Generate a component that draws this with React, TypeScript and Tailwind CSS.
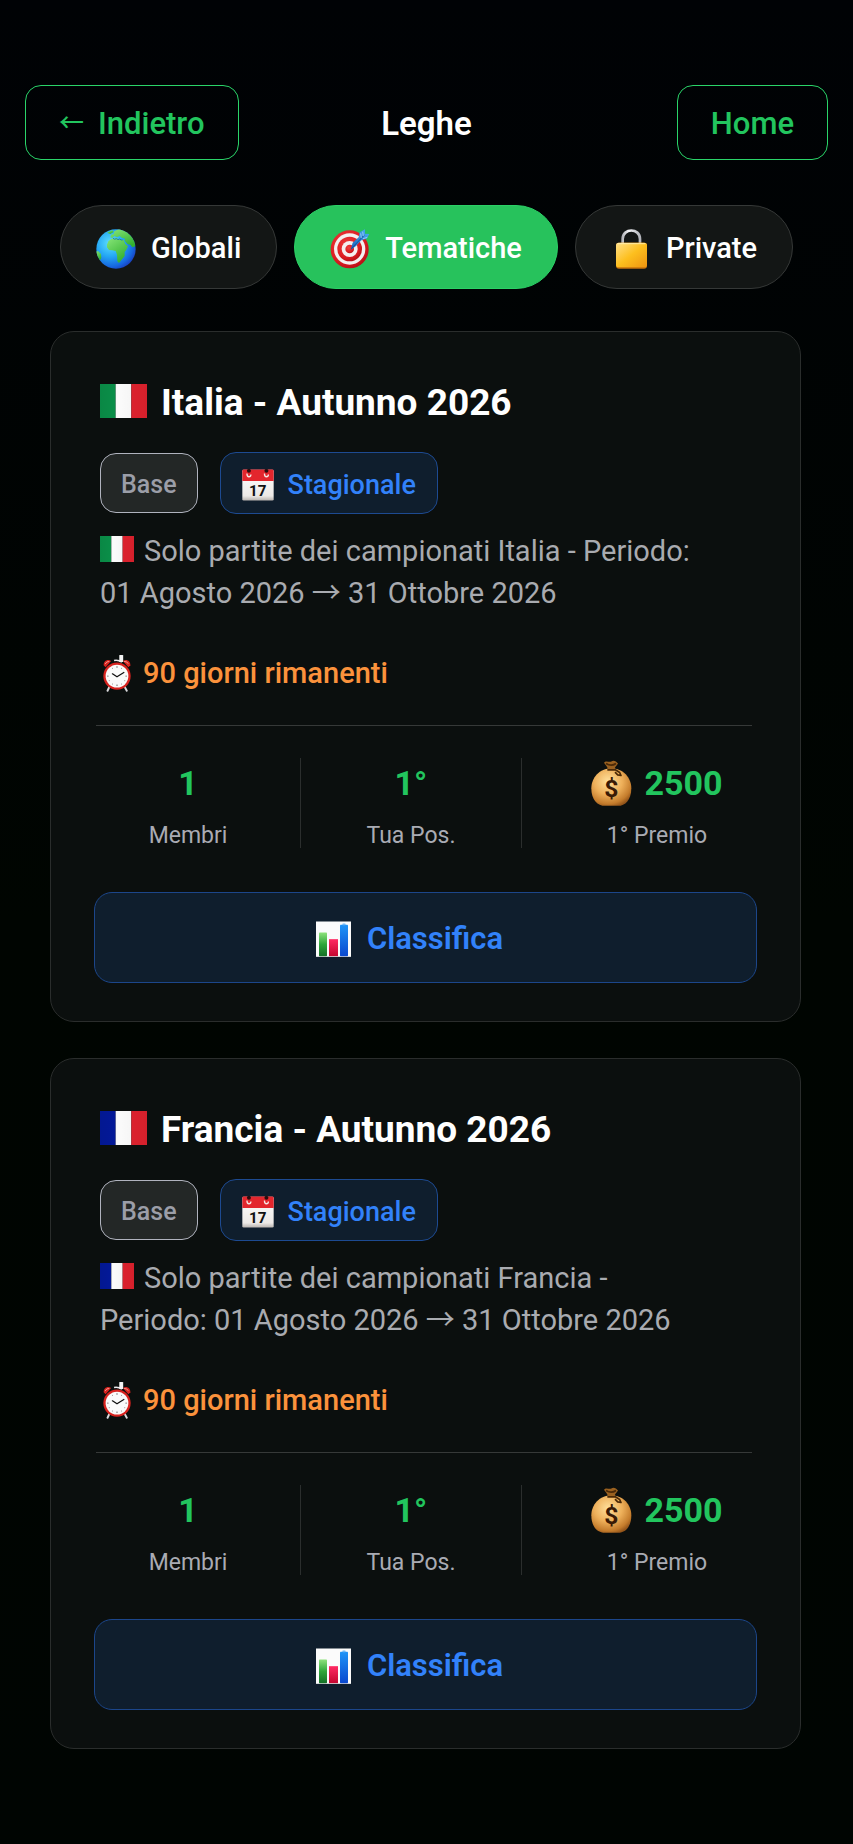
import { useId, useState, type ReactNode } from 'react';

type Country = 'italia' | 'francia';

function Flag({ country, className }: { country: Country; className: string }) {
  const id = useId();
  const left = country === 'italia' ? '#0a9049' : '#03199a';
  return (
    <svg viewBox="0 0 48 34" preserveAspectRatio="none" className={className} aria-hidden="true">
      <defs>
        <linearGradient id={id} x1="0" x2="1" y1="0" y2="0">
          <stop offset="0" stopColor="#000" stopOpacity="0.06" />
          <stop offset="0.4" stopColor="#000" stopOpacity="0" />
          <stop offset="1" stopColor="#000" stopOpacity="0.05" />
        </linearGradient>
      </defs>
      <rect width="16" height="34" fill={left} />
      <rect x="16" width="16" height="34" fill="#fbfbfb" />
      <rect x="32" width="16" height="34" fill="#e0222e" />
      <rect width="48" height="34" fill={`url(#${id})`} />
    </svg>
  );
}

function GlobeIcon() {
  const id = useId();
  return (
    <svg viewBox="17 51 120 120" className="size-10" aria-hidden="true">
      <defs>
        <radialGradient id={`${id}s`} cx="0.35" cy="0.35" r="0.75">
          <stop offset="0" stopColor="#5fe0ff" />
          <stop offset="0.45" stopColor="#25a8f5" />
          <stop offset="0.8" stopColor="#1666e0" />
          <stop offset="1" stopColor="#1a35b5" />
        </radialGradient>
        <linearGradient id={`${id}l`} x1="0" y1="0" x2="0.6" y2="1">
          <stop offset="0" stopColor="#86e578" />
          <stop offset="1" stopColor="#33b02f" />
        </linearGradient>
        <clipPath id={`${id}c`}>
          <circle cx="77" cy="111" r="59" />
        </clipPath>
      </defs>
      <circle cx="77" cy="111" r="59" fill={`url(#${id}s)`} />
      <g clipPath={`url(#${id}c)`} fill={`url(#${id}l)`}>
        <path d="M50 98 L54 88 L64 80 L78 78 L88 82 L100 84 L105 96 L113 103 L108 113 L103 120 L103 132 L95 142 L86 153 L81 148 L80 128 L76 117 L66 115 L56 114 L50 106 Z" />
        <path d="M60 76 L62 68 L70 66 L72 58 L84 52 L104 52 L124 70 L136 92 L134 103 L126 106 L120 98 L112 97 L103 86 L104 80 L94 77 L88 72 L80 76 L72 72 L66 78 Z" />
        <path d="M50 62 L66 54 L70 60 L60 66 Z" />
        <path d="M14 118 L24 118 L32 126 L33 138 L28 146 L20 140 Z" />
      </g>
      <path d="M68 79 q5 5 10 1 q5 5 10 1 q4 4 9 3" fill="none" stroke="#187fb0" strokeWidth="3" />
    </svg>
  );
}

function TargetIcon() {
  const id = useId();
  return (
    <svg viewBox="996 503 120 120" className="size-10" aria-hidden="true">
      <defs>
        <radialGradient id={`${id}r`} cx="0.4" cy="0.35" r="0.7">
          <stop offset="0" stopColor="#f0413f" />
          <stop offset="0.7" stopColor="#dc1c22" />
          <stop offset="1" stopColor="#b30d14" />
        </radialGradient>
        <linearGradient id={`${id}d`} x1="0" y1="1" x2="1" y2="0">
          <stop offset="0" stopColor="#1a5fb8" />
          <stop offset="1" stopColor="#4ab2f5" />
        </linearGradient>
      </defs>
      <circle cx="1055" cy="564" r="57" fill={`url(#${id}r)`} />
      <circle cx="1055" cy="563" r="47" fill="#f4efef" />
      <circle cx="1055" cy="563" r="37" fill={`url(#${id}r)`} />
      <circle cx="1055" cy="563" r="24" fill="#f4efef" />
      <circle cx="1055" cy="563" r="13" fill={`url(#${id}r)`} />
      <path d="M1058 566 L1064 544 L1082 528 L1085 513 L1101 504 L1101 517 L1114 518 L1106 532 L1090 537 L1074 554 Z" fill={`url(#${id}d)`} />
      <path d="M1060 562 L1098 522" stroke="#0f4f9e" strokeWidth="3" />
      <path d="M1088 516 L1090 530 M1094 511 L1096 524 M1095 532 L1108 528" stroke="#bfe4ff" strokeWidth="2" />
    </svg>
  );
}

function LockIcon() {
  const id = useId();
  return (
    <svg viewBox="570 502 120 120" className="size-10" aria-hidden="true">
      <defs>
        <linearGradient id={`${id}b`} x1="0" y1="0" x2="1" y2="1">
          <stop offset="0" stopColor="#ffe08a" />
          <stop offset="0.5" stopColor="#fdbf1e" />
          <stop offset="1" stopColor="#ee9410" />
        </linearGradient>
        <linearGradient id={`${id}s`} x1="0" y1="0" x2="1" y2="0">
          <stop offset="0" stopColor="#b4b6bc" />
          <stop offset="0.35" stopColor="#f4f4f7" />
          <stop offset="1" stopColor="#b3b5bb" />
        </linearGradient>
      </defs>
      <path d="M605 548 V532 C605 498 657 498 657 532 V548" fill="none" stroke={`url(#${id}s)`} strokeWidth="8" />
      <rect x="585" y="543" width="93" height="78" rx="9" fill="#c9740c" />
      <rect x="585" y="543" width="93" height="74" rx="8" fill={`url(#${id}b)`} />
      <path d="M591 546 H672" stroke="#fff0b8" strokeWidth="2.5" strokeLinecap="round" />
    </svg>
  );
}

function CalendarIcon() {
  const id = useId();
  return (
    <svg viewBox="609 450 97 96" className="size-8 shrink-0" aria-hidden="true">
      <defs>
        <linearGradient id={id} x1="0" y1="0" x2="0" y2="1">
          <stop offset="0" stopColor="#fff" />
          <stop offset="0.85" stopColor="#ece9e6" />
          <stop offset="1" stopColor="#b9b4b0" />
        </linearGradient>
      </defs>
      <rect x="610" y="452" width="95" height="93" rx="4" fill={`url(#${id})`} />
      <path d="M610 486 V455 q0-4 4-4 H701 q4 0 4 4 V486 Z" fill="#e3262d" />
      <g fill="#2a0d0e">
        <circle cx="630" cy="455" r="6" />
        <circle cx="683" cy="455" r="6" />
      </g>
      <g fill="none" stroke="#f5e9e6" strokeWidth="4">
        <path d="M624 463 q0 10 6 10 q6 0 6-7" />
        <path d="M677 463 q0 10 6 10 q6 0 6-7" />
      </g>
      <text x="657" y="532" textAnchor="middle" fontSize="46" fontWeight="700" fill="#111" className="font-['Roboto',sans-serif]">
        17
      </text>
    </svg>
  );
}

function AlarmIcon() {
  return (
    <svg viewBox="188 93 86 115" className="h-[38px] w-7 shrink-0" aria-hidden="true">
      <path d="M208 192 L202 205 M254 192 L261 205" stroke="#d9d9dc" strokeWidth="6" strokeLinecap="round" />
      <path d="M190 127 C189 113 203 106 213 114 L196 133 Z" fill="#d9231f" />
      <path d="M272 127 C273 113 259 106 249 114 L266 133 Z" fill="#d9231f" />
      <path d="M195 122 q4-8 11-7 M254 115 q8-1 11 6" fill="none" stroke="#f59a90" strokeWidth="3" strokeLinecap="round" />
      <path d="M222 112 q12-3 24 5" fill="none" stroke="#e9e9ec" strokeWidth="5" />
      <rect x="238" y="95" width="12" height="22" rx="2" fill="#f4f4f4" />
      <circle cx="231" cy="160" r="42" fill="#d8231f" />
      <circle cx="231" cy="160" r="35" fill="#fafafa" />
      <g fill="#555">
        <circle cx="231" cy="132" r="2" />
        <circle cx="231" cy="188" r="2" />
        <circle cx="203" cy="160" r="2" />
        <circle cx="259" cy="160" r="2" />
        <circle cx="245" cy="136" r="1.5" />
        <circle cx="217" cy="136" r="1.5" />
        <circle cx="245" cy="184" r="1.5" />
        <circle cx="217" cy="184" r="1.5" />
        <circle cx="207" cy="174" r="1.5" />
        <circle cx="255" cy="174" r="1.5" />
      </g>
      <path d="M217 153 L231 162 L252 149" fill="none" stroke="#111" strokeWidth="4" strokeLinecap="round" strokeLinejoin="round" />
    </svg>
  );
}

function MoneyBagIcon() {
  const id = useId();
  return (
    <svg viewBox="504 420 123 140" className="h-[47px] w-[41px]" aria-hidden="true">
      <defs>
        <radialGradient id={`${id}b`} cx="0.42" cy="0.35" r="0.7">
          <stop offset="0" stopColor="#ffe09c" />
          <stop offset="0.5" stopColor="#eeb05a" />
          <stop offset="0.85" stopColor="#c47c2c" />
          <stop offset="1" stopColor="#94551a" />
        </radialGradient>
      </defs>
      <path d="M565 444 C600 444 625 472 625 504 C625 540 606 557 585 557 H546 C524 557 505 540 505 504 C505 472 530 444 565 444 Z" fill={`url(#${id}b)`} />
      <path d="M543 428 C549 419 558 428 565 424 C573 419 580 425 585 430 C580 437 575 442 574 448 H555 C554 441 548 435 543 428 Z" fill="#9a6120" />
      <path d="M549 430 Q565 440 579 430" fill="none" stroke="#4c2a08" strokeWidth="5" />
      <path d="M553 449 H577 L590 457 L594 466 L584 464 L576 456" fill="none" stroke="#4a2907" strokeWidth="5" strokeLinejoin="round" />
      <text x="565" y="530" textAnchor="middle" fontSize="74" fontWeight="700" fill="#3a1a05" className="font-['Roboto',sans-serif]">
        $
      </text>
    </svg>
  );
}

function ChartIcon() {
  const id = useId();
  return (
    <svg viewBox="828 900 105 107" className="h-9 w-[35px]" aria-hidden="true">
      <defs>
        <linearGradient id={`${id}g`} x1="0" y1="0" x2="0" y2="1">
          <stop offset="0" stopColor="#8ee27c" />
          <stop offset="0.5" stopColor="#2fa63a" />
          <stop offset="1" stopColor="#147026" />
        </linearGradient>
        <linearGradient id={`${id}r`} x1="0" y1="0" x2="0" y2="1">
          <stop offset="0" stopColor="#ff2a63" />
          <stop offset="1" stopColor="#c4062f" />
        </linearGradient>
        <linearGradient id={`${id}b`} x1="0" y1="0" x2="0" y2="1">
          <stop offset="0" stopColor="#1f94f7" />
          <stop offset="1" stopColor="#0a48cf" />
        </linearGradient>
      </defs>
      <rect x="828" y="901" width="105" height="106" fill="#fbfbfb" />
      <rect x="837" y="934" width="24" height="71" rx="2" fill={`url(#${id}g)`} />
      <rect x="867" y="954" width="27" height="51" fill={`url(#${id}r)`} />
      <rect x="900" y="911" width="24" height="94" rx="2" fill={`url(#${id}b)`} />
      <rect x="907" y="907" width="10" height="5" rx="2" fill="#6fb7f5" />
    </svg>
  );
}

interface League {
  country: Country;
  name: string;
  description: string;
  daysLeft: number;
  members: number;
  position: number;
  prize: number;
}

const leagues: League[] = [
  {
    country: 'italia',
    name: 'Italia - Autunno 2026',
    description: 'Solo partite dei campionati Italia - Periodo: 01 Agosto 2026 → 31 Ottobre 2026',
    daysLeft: 90,
    members: 1,
    position: 1,
    prize: 2500,
  },
  {
    country: 'francia',
    name: 'Francia - Autunno 2026',
    description: 'Solo partite dei campionati Francia - Periodo: 01 Agosto 2026 → 31 Ottobre 2026',
    daysLeft: 90,
    members: 1,
    position: 1,
    prize: 2500,
  },
];

function Stat({ value, label, icon, className }: { value: string; label: string; icon?: ReactNode; className?: string }) {
  return (
    <div className={`flex flex-col-reverse items-center gap-4 ${className ?? ''}`}>
      <dt className="text-[23px] leading-6 text-[#a9abb3]">{label}</dt>
      <dd className="flex h-[50px] items-center gap-3 text-[34px] font-bold text-[#22c55e]">
        {icon}
        {value}
      </dd>
    </div>
  );
}

function LeagueCard({ league }: { league: League }) {
  return (
    <article className="rounded-3xl border border-[#2a2d2c] bg-[#0b0f0e] px-[43px] pt-12 pb-[38px]">
      <div className="px-[6px]">
        <h2 className="flex items-center gap-[14px] text-[37px] leading-[45px] font-bold text-white">
          <Flag country={league.country} className="mb-1 h-[34px] w-[47px]" />
          {league.name}
        </h2>
        <div className="mt-[27px] flex items-center gap-[22px]">
          <span className="flex h-[60px] items-center rounded-2xl border border-[#b0b3be] bg-[#232726] px-5 pt-1 text-[25px] font-medium text-[#9b9ea8]">
            Base
          </span>
          <span className="flex h-[62px] items-center gap-[14px] rounded-2xl border border-[#1d4a91] bg-[#0f1e2d] px-[21px] pt-1 text-[27px] font-medium text-[#3282fa]">
            <CalendarIcon />
            Stagionale
          </span>
        </div>
        <p className="mt-4 pr-10 text-[29px] leading-[42px] text-[#a9abb0]">
          <Flag country={league.country} className="mr-[10px] inline-block h-[26px] w-[34px] align-[-1px]" />
          {league.description}
        </p>
        <p className="mt-[38px] flex items-center gap-3 pl-[3px] text-[29px] leading-[42px] font-medium text-[#fb923c]">
          <AlarmIcon />
          {league.daysLeft} giorni rimanenti
        </p>
      </div>
      <dl className="mr-[5px] ml-[2px] mt-[31px] grid grid-cols-[205fr_221fr_230fr] divide-x divide-[#2b2e2d] border-t border-[#363938] pt-8">
        <Stat className="pr-5" value={`${league.members}`} label="Membri" />
        <Stat value={`${league.position}°`} label="Tua Pos." />
        <Stat className="pl-10" value={`${league.prize}`} label="1° Premio" icon={<MoneyBagIcon />} />
      </dl>
      <button
        type="button"
        className="mt-[44px] flex h-[91px] w-full items-center justify-center gap-4 rounded-[18px] border border-[#1c468a] bg-[#0f1e2d] pt-[3px] pr-8 text-[31px] font-semibold text-[#3282fa]"
      >
        <ChartIcon />
        Classifica
      </button>
    </article>
  );
}

const tabs = [
  { id: 'globali', label: 'Globali', Icon: GlobeIcon },
  { id: 'tematiche', label: 'Tematiche', Icon: TargetIcon },
  { id: 'private', label: 'Private', Icon: LockIcon },
];

export default function App() {
  const [active, setActive] = useState('tematiche');
  return (
    <div className="min-h-screen bg-linear-to-b from-[#000205] via-[#000501] to-[#000502] pt-[85px] pb-24 font-['Roboto','Noto_Sans_CJK_SC',sans-serif]">
      <header className="grid grid-cols-[1fr_auto_1fr] items-center px-[25px]">
        <button
          type="button"
          className="flex h-[75px] items-center gap-[14px] justify-self-start rounded-2xl border border-[#2ad469] px-[33px] pt-[3px] text-[31px] font-medium text-[#22c55e]"
        >
          <span className="text-[25px]">←</span>
          Indietro
        </button>
        <h1 className="pt-[2px] text-[33px] font-semibold text-white">Leghe</h1>
        <a
          href="#home"
          className="flex h-[75px] items-center justify-self-end rounded-2xl border border-[#2ad469] px-[33px] pt-[3px] text-[31px] font-medium text-[#22c55e]"
        >
          Home
        </a>
      </header>
      <nav className="mt-[45px] flex justify-center gap-[17px]">
        {tabs.map(({ id, label, Icon }) => (
          <button
            key={id}
            type="button"
            aria-pressed={active === id}
            onClick={() => setActive(id)}
            className={`flex h-[84px] items-center gap-[15px] rounded-full border px-[35px] pt-[3px] text-[29px] font-medium text-white ${
              active === id ? 'border-[#2bd166] bg-[#27c25c]' : 'border-[#353837] bg-[#131615]'
            }`}
          >
            <Icon />
            {label}
          </button>
        ))}
      </nav>
      <main className="mt-[42px] flex flex-col gap-9 pr-[52px] pl-[50px]">
        {leagues.map((league) => (
          <LeagueCard key={league.country} league={league} />
        ))}
      </main>
    </div>
  );
}
